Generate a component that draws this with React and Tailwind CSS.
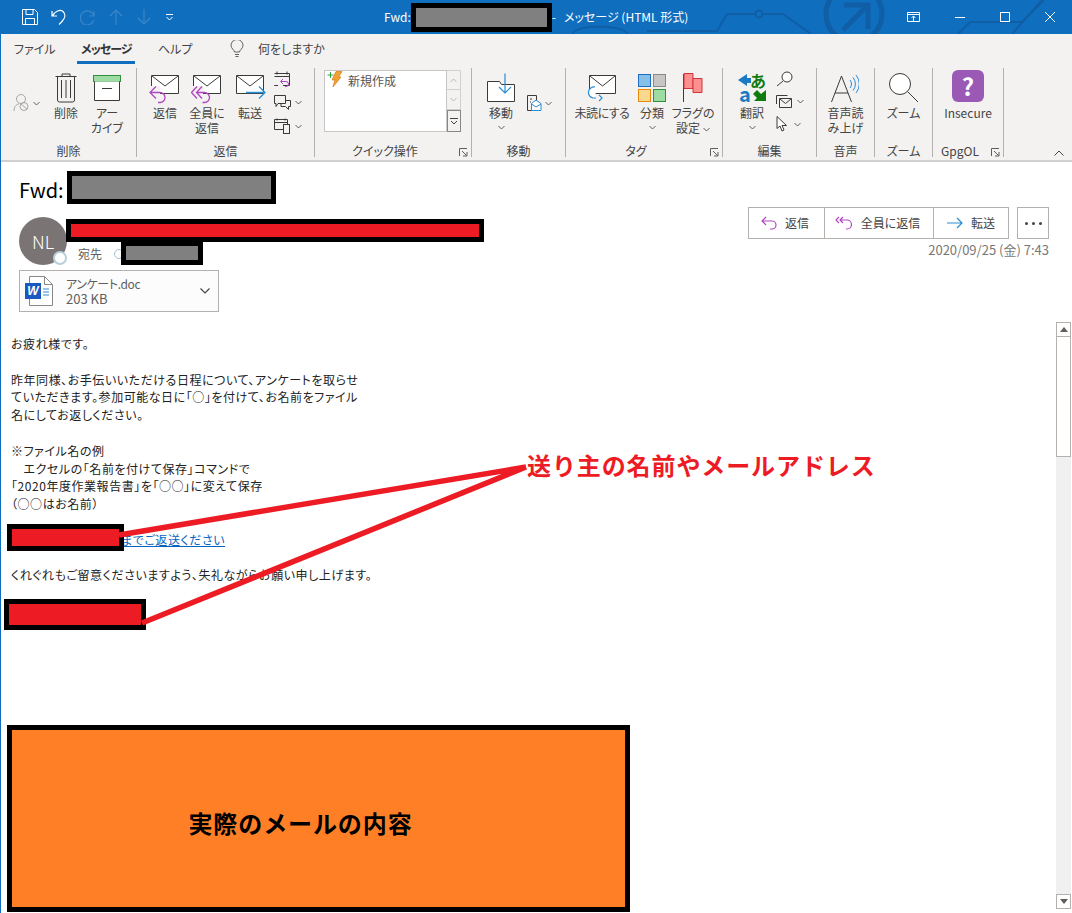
import React from "react";

const font = { fontFamily: '"Noto Sans CJK JP", "Noto Sans", sans-serif' };

const Purple = "#b146c2";
const Blue = "#2a8dd4";
const Dark = "#3b3a39";

const MailIcon = ({ children }) => (
  <svg width="32" height="32" viewBox="0 0 32 32">
    <path d="M2.500 3.500h27v18h-27z" fill="#fff" stroke={Dark} />
    <path d="M3 4l13 10L29 4" fill="none" stroke={Dark} />
    {children}
  </svg>
);

const Launcher = () => (
  <svg width="9" height="9" viewBox="0 0 9 9" fill="none" stroke="#605e5c">
    <path d="M.5 8V.5H8M3 3l4.500 4.500M4 8h4V4" />
  </svg>
);

const Chevron = ({ className = "" }) => (
  <svg width="7" height="5" viewBox="0 0 7 5" fill="none" stroke="#605e5c" className={className}>
    <path d="M.5 1l3 3 3-3" />
  </svg>
);

const Big = ({ icon, label, chevron, className = "" }) => (
  <div className={`flex flex-col items-center shrink-0 ${className}`}>
    <div className="h-[32px] flex items-center justify-center">{icon}</div>
    <div className="mt-[1px] text-[12px] leading-[15px] text-[#444] text-center whitespace-pre">{label}</div>
    {chevron && <Chevron className="mt-[5px]" />}
  </div>
);

const Group = ({ label, width, launcher, children, className = "" }) => (
  <div className="shrink-0 flex flex-col h-[89px] border-r border-[#b3b0ad] relative" style={{ width }}>
    <div className={`h-[77px] flex pt-[4px] ${className}`}>{children}</div>
    <div className={`h-[12px] flex items-center justify-center text-[12px] leading-[12px] text-[#444] ${launcher ? "pr-[16px]" : ""}`}>
      {label}
    </div>
    {launcher && (
      <div className="absolute right-[3px] bottom-0">
        <Launcher />
      </div>
    )}
  </div>
);

const Redact = ({ className, fill = "bg-[#808080]" }) => (
  <div className={`absolute border-[5px] border-black ${fill} ${className}`} />
);

function TitleBar() {
  return (
    <div className="h-[34px] bg-[#106ebe] relative flex items-center text-white overflow-hidden shrink-0">
      <svg className="absolute right-0 top-0" width="500" height="34" viewBox="0 0 500 34" fill="none" stroke="#0f5ea6" strokeWidth="2">
        <path d="M0 34c4-10 50-10 56 0M75 31h70l10-17h28M191 14h20l28 20" />
        <circle cx="187" cy="14" r="3.500" />
        <circle cx="282" cy="14" r="28" strokeWidth="5" />
        <path d="M271 30l25-25M272 5h24v24" strokeWidth="5" />
        <path d="M386 34l12-12h52l22-22M440 34l30-34" />
      </svg>
      <div className="relative flex items-center w-[180px] pl-[21px] gap-[13px]">
        <svg width="16" height="16" viewBox="0 0 16 16" fill="none" stroke="#fff">
          <path d="M.5.500h12l3 3v12H.5zM4 .5v5h7v-5M3.500 15.500v-6h9v6" />
        </svg>
        <svg width="16" height="16" viewBox="0 0 16 16" fill="none" stroke="#fff" strokeWidth="1.200">
          <path d="M1 2v5h5M1.500 7C4 2 9 0 12 2.500c3 3 2 7-1 10l-3 3" />
        </svg>
        <svg width="16" height="16" viewBox="0 0 16 16" fill="none" stroke="#3a86c8" strokeWidth="1.200">
          <path d="M14 2v5H9M14 7a7 7 0 1 0 0 4" />
        </svg>
        <svg width="14" height="16" viewBox="0 0 14 16" fill="none" stroke="#3a86c8" strokeWidth="1.200">
          <path d="M7 16V1M1 7l6-6 6 6" />
        </svg>
        <svg width="14" height="16" viewBox="0 0 14 16" fill="none" stroke="#3a86c8" strokeWidth="1.200" className="ml-[1px]">
          <path d="M7 0v15M1 9l6 6 6-6" />
        </svg>
        <svg width="8" height="6" viewBox="0 0 8 6" fill="none" stroke="#fff" className="ml-[2px]">
          <path d="M0 .5h7M.5 3l3 3 3-3" />
        </svg>
      </div>
      <div className="relative ml-[203px] text-[12px] flex items-center whitespace-nowrap">
        <span>Fwd:</span>
        <span className="w-[141px] h-[29px] bg-[#808080] border-[5px] border-black" />
        <span>- &nbsp;&nbsp;メッセージ (HTML 形式)</span>
      </div>
      <div className="relative ml-auto flex items-center pr-[17px] gap-[35px]">
        <svg width="13" height="10" viewBox="0 0 13 10" fill="none" stroke="#fff">
          <path d="M.5.500h12v9H.5zM.5 2.500h12M6.500 9V4M4.500 6l2-2 2 2" />
        </svg>
        <div className="w-[10px] h-px bg-white" />
        <div className="w-[10px] h-[10px] border border-white" />
        <svg width="10" height="10" viewBox="0 0 10 10" stroke="#fff">
          <path d="M0 0l10 10M10 0L0 10" />
        </svg>
      </div>
    </div>
  );
}

function Tabs() {
  return (
    <div className="h-[30px] flex items-center text-[12px] text-[#444] pl-[13px] shrink-0">
      <span className="w-[67px]">ファイル</span>
      <span className="relative w-[77px] font-bold text-[#333] tracking-[-1px]">
        メッセージ
        <span className="absolute -left-[4px] w-[58px] top-[21px] h-[3px] bg-[#106ebe]" />
      </span>
      <span className="w-[72px]">ヘルプ</span>
      <svg width="14" height="18" viewBox="0 0 14 18" fill="none" stroke="#605e5c">
        <path d="M4.500 12c0-2-3.500-3.500-3.500-6.500a6 6 0 0 1 12 0c0 3-3.500 4.500-3.500 6.500zM5 14.500h4M5.500 16.500h3" />
      </svg>
      <span className="ml-[14px]">何をしますか</span>
    </div>
  );
}

function Ribbon() {
  return (
    <div className="h-[98px] flex items-start shrink-0 pt-[4px] relative border-b-2 border-[#d2d0ce]">
      <Group label="削除" width={136}>
        <div className="w-[42px] pl-[12px] h-[34px] mt-[14px] flex items-center gap-[3px]">
          <svg width="17" height="18" viewBox="0 0 17 18" fill="none" stroke="#a6a6a6">
            <circle cx="8" cy="5" r="4.500" />
            <path d="M1 17c0-5 3-7 5-7" />
            <circle cx="11" cy="12.500" r="4" />
            <path d="M8 10l6 5" />
          </svg>
          <Chevron />
        </div>
        <Big
          className="w-[46px]"
          label="削除"
          icon={
            <svg width="22" height="30" viewBox="0 0 22 30" fill="none" stroke={Dark}>
              <path d="M.5 3.500h21M7 3.500V1h8v2.500M2.500 3.500V27a2 2 0 0 0 2 2h13a2 2 0 0 0 2-2V3.500M6.500 7v18M11 7v18M15.500 7v18" />
            </svg>
          }
        />
        <Big
          className="w-[36px]"
          label={"アー\nカイブ"}
          icon={
            <svg width="28" height="26" viewBox="0 0 28 26">
              <rect x=".5" y=".5" width="27" height="6" fill="#9fdca4" stroke="#2f8f3f" />
              <path d="M1.500 6.500v19h25v-19" fill="#fff" stroke={Dark} />
              <path d="M9 13.500h10" stroke={Dark} />
            </svg>
          }
        />
      </Group>

      <Group label="返信" width={178} className="pl-[11px]">
        <Big
          className="w-[34px]"
          label="返信"
          icon={
            <MailIcon>
              <path d="M1 14h10v9H1z" fill="#f3f2f1" />
              <path d="M7 14.500L1 20.500l6 6M1 20.500h10a5 5 0 0 1 0 10H9" fill="none" stroke={Purple} strokeWidth="1.300" />
            </MailIcon>
          }
        />
        <Big
          className="w-[50px]"
          label={"全員に\n返信"}
          icon={
            <MailIcon>
              <path d="M0 14h12v9H0z" fill="#f3f2f1" />
              <path d="M6 14.500L.5 20.500l5.500 6M11 14.500l-5.500 6 5.500 6M5.500 20.500h8a5 5 0 0 1 0 10h-2" fill="none" stroke={Purple} strokeWidth="1.300" />
            </MailIcon>
          }
        />
        <Big
          className="w-[36px]"
          label="転送"
          icon={
            <MailIcon>
              <path d="M12 20.500h19M25 14.500l6 6-6 6" fill="none" stroke={Blue} strokeWidth="1.300" />
            </MailIcon>
          }
        />
        <div className="flex flex-col gap-[8px] ml-[6px] mt-[-1px]">
          <svg width="16" height="16" viewBox="0 0 16 16" fill="none">
            <path d="M3 .5v3M13 .5v3M.5 2.500h15v12H9M4 14.500H.5zM.5 5.500h15" stroke={Dark} />
            <path d="M9 8l-2.500 2.500L9 13M7 10.500h5a2 2 0 0 1 0 5h-1" stroke={Purple} />
          </svg>
          <div className="flex items-center gap-[4px]">
            <svg width="17" height="15" viewBox="0 0 17 15" fill="none" stroke={Dark}>
              <path d="M.5.500h11v8H4l-2 3v-3H.5zM11.500 5.500h5v6h-2v3l-3-3H7v-3" fill="#f3f2f1" />
            </svg>
            <Chevron />
          </div>
          <div className="flex items-center gap-[4px]">
            <svg width="17" height="16" viewBox="0 0 17 16" fill="none" stroke={Dark}>
              <path d="M3 .5v2M11 .5v2M.5 1.500h13v10H.5zM.5 4.500h13" />
              <rect x="9.500" y="6.500" width="6" height="9" fill="#f3f2f1" />
            </svg>
            <Chevron />
          </div>
        </div>
      </Group>

      <Group label="クイック操作" width={157} launcher className="pl-[9px] !pt-[2px]">
        <div className="w-[123px] h-[62px] bg-white border border-[#c8c6c4] flex items-start pl-[2px] text-[12px] text-[#555]">
          <svg width="16" height="17" viewBox="0 0 16 17">
            <path d="M9 .5h6L11.500 6H14L6 16l2-7H5z" fill="#f0a030" stroke="#d87a10" strokeWidth=".7" />
            <path d="M3.500 1v6M.5 4h6" stroke="#2ea043" />
          </svg>
          <span className="ml-[5px] leading-[20px]">新規作成</span>
        </div>
        <div className="w-[14px] h-[62px] flex flex-col text-[#a6a6a6]">
          <div className="h-[20px] border border-l-0 border-[#d2d0ce] flex items-center justify-center">
            <Chevron className="rotate-180 opacity-40" />
          </div>
          <div className="h-[20px] border border-l-0 border-t-0 border-[#d2d0ce] flex items-center justify-center">
            <Chevron className="opacity-40" />
          </div>
          <div className="h-[22px] border border-[#8a8886] flex items-center justify-center bg-[#f3f2f1]">
            <svg width="8" height="6" viewBox="0 0 8 6" fill="none" stroke="#444">
              <path d="M0 .5h8M1 3l3 3 3-3" />
            </svg>
          </div>
        </div>
      </Group>

      <Group label="移動" width={94} className="pl-[14px]">
        <Big
          className="w-[30px]"
          label="移動"
          chevron
          icon={
            <svg width="28" height="30" viewBox="0 0 28 30" fill="none">
              <path d="M.5 8.500h12l2 3h13v17H.5z" fill="#fff" stroke={Dark} />
              <path d="M18 .5v20M12 14l6 6 6-6" stroke={Blue} strokeWidth="1.200" />
            </svg>
          }
        />
        <div className="flex items-center gap-[3px] ml-[11px] h-[22px] mt-[20px]">
          <svg width="15" height="18" viewBox="0 0 15 18" fill="none">
            <path d="M.5 1.500h9v15H.5z" stroke={Dark} />
            <path d="M3 5h2M3 8h1" stroke={Dark} />
            <path d="M4.500 9.500L9 6l5 3.500v7H4.500z" fill="#fff" stroke={Blue} />
            <path d="M4.500 10L9 13l5-3" stroke={Blue} />
          </svg>
          <Chevron />
        </div>
      </Group>

      <Group label="タグ" width={157} launcher className="pl-[8px]">
        <Big
          className="w-[56px]"
          label={<span className="tracking-[-0.5px]">未読にする</span>}
          icon={
            <svg width="32" height="32" viewBox="0 0 32 32" fill="none">
              <path d="M3.500 3.500h26v18h-26z" fill="#fff" stroke={Dark} />
              <path d="M4 4l12.500 10L29 4" stroke={Dark} />
              <path d="M9 15a5.500 5.500 0 0 0-2 11h3M13 23l3 3-3 3" fill="#fff" stroke={Blue} strokeWidth="1.200" />
            </svg>
          }
        />
        <Big
          className="w-[36px] ml-[4px]"
          label="分類"
          chevron
          icon={
            <div className="grid grid-cols-2 gap-[2px] w-[28px]">
              <div className="h-[13px] border border-[#1b6ec2] bg-[#86bfea]" />
              <div className="h-[13px] border border-[#8a8886] bg-[#c8c6c4]" />
              <div className="h-[13px] border border-[#e8890c] bg-[#fad98e]" />
              <div className="h-[13px] border border-[#2f8f3f] bg-[#9fdca4]" />
            </div>
          }
        />
        <Big
          className="w-[46px]"
          label={
            <>
              フラグの
              <br />
              設定
              <Chevron className="inline ml-[3px]" />
            </>
          }
          icon={
            <svg width="20" height="30" viewBox="0 0 20 30" fill="none">
              <path d="M.5 1v28" stroke={Dark} />
              <path d="M1 .5h9v15H1z" fill="#fc8f8f" stroke="#d13438" />
              <path d="M10 5.500h9v14h-9z" fill="#fc8f8f" stroke="#d13438" />
            </svg>
          }
        />
      </Group>

      <Group label="編集" width={94} className="pl-[12px]">
        <Big
          className="w-[34px]"
          label="翻訳"
          chevron
          icon={
            <svg width="28" height="30" viewBox="0 0 28 30" fontFamily="Noto Sans CJK JP" fontWeight="700" className="overflow-visible">
              <path d="M0 7l9-6v4h4v5H9v3z" fill="#1b7ac4" />
              <text x="12" y="14" fontSize="16" fill="#107c10">あ</text>
              <text x="1" y="29" fontSize="20" fill="#1b7ac4">a</text>
              <path d="M28 28H16l3-3-4-4 4-4 4 4 5-4z" fill="#107c10" />
            </svg>
          }
        />
        <div className="flex flex-col gap-[8px] ml-[7px] mt-[-1px]">
          <svg width="17" height="16" viewBox="0 0 17 16" fill="none" stroke={Dark}>
            <circle cx="11" cy="6" r="5" fill="#fff" />
            <path d="M7 10l-6 5" />
          </svg>
          <div className="flex items-center gap-[5px]">
            <svg width="16" height="13" viewBox="0 0 16 13" fill="none" stroke={Dark}>
              <path d="M.5 9V.5h11M3.500 3.500h12v9h-12zM4 4l5.500 4.500L15 4" />
            </svg>
            <Chevron />
          </div>
          <div className="flex items-center gap-[6px]">
            <svg width="12" height="16" viewBox="0 0 12 16" fill="#fff" stroke={Dark}>
              <path d="M1 .5v12l3-2.500 2 5 2-1-2-4.500h4.500z" />
            </svg>
            <Chevron />
          </div>
        </div>
      </Group>

      <Group label="音声" width={58} className="justify-center">
        <Big
          label={"音声読\nみ上げ"}
          icon={
            <svg width="28" height="29" viewBox="0 0 28 29" fill="none" stroke={Dark}>
              <path d="M.5 28L10.500 2l10 26M4 19h13" />
              <path d="M19 6a6 6 0 0 1 0 8M22 3.500a10 10 0 0 1 0 13M25 1a14 14 0 0 1 0 18" stroke={Blue} />
            </svg>
          }
        />
      </Group>

      <Group label="ズーム" width={58} className="justify-center">
        <Big
          label="ズーム"
          icon={
            <svg width="30" height="30" viewBox="0 0 30 30" fill="none" stroke={Dark}>
              <circle cx="11" cy="11" r="10.500" fill="#fff" />
              <path d="M18.500 18.500l10.500 10.500" />
            </svg>
          }
        />
      </Group>

      <Group label="GpgOL" width={71} launcher className="justify-center">
        <Big
          label="Insecure"
          icon={
            <div className="w-[32px] h-[32px] mt-[-4px] rounded-[6px] bg-[#9b59b6] text-white flex items-center justify-center font-bold text-[24px] leading-none">
              ?
            </div>
          }
        />
      </Group>

      <svg className="absolute left-[1053px] bottom-[4px]" width="10" height="6" viewBox="0 0 10 6" fill="none" stroke="#444">
        <path d="M.5 5.500L5 1l4.500 4.500" />
      </svg>
    </div>
  );
}

function ActionBtn({ icon, label, className = "" }) {
  return (
    <div className={`h-full flex items-center justify-center gap-[8px] ${className}`}>
      {icon}
      <span>{label}</span>
    </div>
  );
}

function MailHeader() {
  return (
    <div className="relative h-[160px] shrink-0">
      <div className="pl-[18px] pt-[14px] text-[20px] leading-[28px] text-black">Fwd:</div>
      <div className="flex pl-[18px] mt-[13px] justify-between pr-[23px]">
        <div>
          <div className="flex">
            <div className="relative w-[48px] h-[48px] rounded-full bg-[#7a7574] text-white text-[18px] font-light flex items-center justify-center">
              NL
              <div className="absolute right-0 bottom-0 w-[14px] h-[14px] rounded-full bg-white border-2 border-[#b8d0dc]" />
            </div>
            <div className="ml-[11px] mt-[25px] text-[12px] leading-[16px] text-[#605e5c] flex items-center gap-[12px]">
              宛先
              <span className="w-[10px] h-[10px] rounded-full border border-[#a6c0d0]" />
            </div>
          </div>
          <div className="mt-[5px] w-[200px] h-[42px] border border-[#b3b0ad] bg-[#fcfcfc] flex items-center pl-[5px] pr-[8px]">
            <svg width="28" height="30" viewBox="0 0 28 30" fill="none">
              <path d="M4.500.5h15l8 8v21h-23z" fill="#fff" stroke="#8a8886" />
              <path d="M19.500.5v8h8" stroke="#8a8886" />
              <rect x="0" y="7" width="16" height="16" fill="#185abd" />
              <text x="8" y="19" textAnchor="middle" fontSize="12" fontWeight="700" fontStyle="italic" fill="#fff" fontFamily="Liberation Sans">W</text>
              <path d="M18 13h6M18 16h6M18 19h6" stroke="#2a8dd4" />
            </svg>
            <div className="ml-[13px] text-[#605e5c] flex-1">
              <div className="text-[12px] leading-[15px] tracking-[-0.4px]">アンケート.doc</div>
              <div className="text-[13px] leading-[15px]">203 KB</div>
            </div>
            <svg width="10" height="6" viewBox="0 0 10 6" fill="none" stroke="#444" strokeWidth="1.200">
              <path d="M.5.500L5 5 9.500.5" />
            </svg>
          </div>
        </div>
        <div className="flex flex-col items-end mt-[-10px]">
          <div className="flex gap-[8px]">
            <div className="flex h-[32px] w-[261px] border border-[#b3b0ad] text-[12px] text-[#444] divide-x divide-[#b3b0ad]">
              <ActionBtn
                className="w-[76px] pr-[3px]"
                label="返信"
                icon={
                  <svg width="16" height="14" viewBox="0 0 16 14" fill="none" stroke={Purple} strokeWidth="1.200">
                    <path d="M5 1L1 5l4 4M1 5h10a4 4 0 0 1 0 8H9" />
                  </svg>
                }
              />
              <ActionBtn
                className="w-[109px] pr-[3px]"
                label="全員に返信"
                icon={
                  <svg width="18" height="14" viewBox="0 0 18 14" fill="none" stroke={Purple} strokeWidth="1.200">
                    <path d="M4 1L1 4l3 3M8 1L5 4l3 3M5 4h7a4 4 0 0 1 0 9h-1" />
                  </svg>
                }
              />
              <ActionBtn
                className="flex-1"
                label="転送"
                icon={
                  <svg width="16" height="12" viewBox="0 0 16 12" fill="none" stroke={Blue} strokeWidth="1.200">
                    <path d="M0 6h15M10 1l5 5-5 5" />
                  </svg>
                }
              />
            </div>
            <div className="w-[32px] h-[32px] border border-[#b3b0ad] flex items-center justify-center gap-[4px]">
              <span className="w-[3px] h-[3px] rounded-full bg-[#444]" />
              <span className="w-[3px] h-[3px] rounded-full bg-[#444]" />
              <span className="w-[3px] h-[3px] rounded-full bg-[#444]" />
            </div>
          </div>
          <div className="mt-[2px] text-[13px] leading-[18px] text-[#797775]">2020/09/25 (金) 7:43</div>
        </div>
      </div>
    </div>
  );
}

function Scrollbar() {
  return (
    <div className="w-[15px] mr-px ml-auto shrink-0 flex flex-col h-full pb-[4px]">
      <div className="flex-1 flex flex-col bg-[#f0f0f0]">
        <div className="h-[15px] border border-[#b3b0ad] bg-white flex items-center justify-center">
          <div className="w-0 h-0 border-x-[4px] border-x-transparent border-b-[5px] border-b-[#605e5c]" />
        </div>
        <div className="h-[120px] border border-t-0 border-[#b3b0ad] bg-white" />
        <div className="flex-1" />
        <div className="h-[15px] border border-[#b3b0ad] bg-white flex items-center justify-center">
          <div className="w-0 h-0 border-x-[4px] border-x-transparent border-t-[5px] border-t-[#605e5c]" />
        </div>
      </div>
    </div>
  );
}

function MailBody() {
  return (
    <div className="flex-1 min-h-0 flex">
      <div className="pl-[10px] pt-[13px] text-[12px] leading-[17.8px] tracking-[0.55px] text-[#222] whitespace-pre">
        <div>お疲れ様です。</div>
        <div className="h-[17.800px]" />
        <div>昨年同様、お手伝いいただける日程について、アンケートを取らせ</div>
        <div>ていただきます。参加可能な日に「○」を付けて、お名前をファイル</div>
        <div>名にしてお返しください。</div>
        <div className="h-[17.800px]" />
        <div>※ファイル名の例</div>
        <div>　エクセルの「名前を付けて保存」コマンドで</div>
        <div>「2020年度作業報告書」を「○○」に変えて保存</div>
        <div>（○○はお名前）</div>
        <div className="h-[17.800px]" />
        <div className="pl-[110px] text-[#0563c1] underline">までご返送ください</div>
        <div className="h-[17.800px]" />
        <div>くれぐれもご留意くださいますよう、失礼ながらお願い申し上げます。</div>
      </div>
      <Scrollbar />
    </div>
  );
}

export default function App() {
  return (
    <div style={font} className="relative w-[1072px] h-[913px] overflow-hidden bg-white flex flex-col border-l border-[#106ebe] [font-feature-settings:'palt']">
      <TitleBar />
      <div className="bg-[#f3f2f1] shrink-0">
        <Tabs />
        <Ribbon />
      </div>
      <MailHeader />
      <MailBody />

      {/* annotations pasted on top of the screenshot */}
      <Redact className="left-[66px] top-[171px] w-[209px] h-[33px]" />
      <Redact className="left-[65px] top-[219px] w-[418px] h-[23px]" fill="bg-[#ed1c24]" />
      <Redact className="left-[120px] top-[241px] w-[82px] h-[24px]" />
      <Redact className="left-[6px] top-[524px] w-[117px] h-[27px]" fill="bg-[#ed1c24]" />
      <Redact className="left-[3px] top-[599px] w-[142px] h-[31px]" fill="bg-[#ed1c24]" />
      <svg className="absolute left-[-1px] top-0 pointer-events-none" width="1072" height="913" fill="none" stroke="#ed1c24" strokeWidth="5.500">
        <path d="M119 535L526 467M142 623L526 467" />
      </svg>
      <div className="absolute left-[526px] top-[450px] text-[24px] leading-[30px] font-bold text-[#ed1c24] tracking-[0.9px] whitespace-nowrap [font-feature-settings:normal]">
        送り主の名前やメールアドレス
      </div>
      <div className="absolute left-[6px] top-[725px] w-[623px] h-[187px] border-[5px] border-black bg-[#ff7f27] flex items-center justify-center pt-[8px] pr-[36px] text-[24px] font-bold text-black tracking-[0.9px] [font-feature-settings:normal]">
        実際のメールの内容
      </div>
    </div>
  );
}
